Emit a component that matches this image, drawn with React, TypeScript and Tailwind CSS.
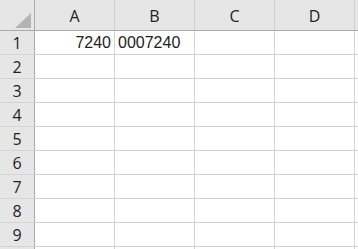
const cols = ['A', 'B', 'C', 'D'];
const rows = [1, 2, 3, 4, 5, 6, 7, 8, 9, 10];

const data: Record<string, string> = {
  A1: '7240',
  B1: '0007240',
};

function Corner() {
  return (
    <div className="relative w-[35px] h-full shrink-0 bg-[#e6e6e6] border-r border-[#ababab]">
      <svg width="16" height="15" className="absolute right-[3px] bottom-[2px]" viewBox="0 0 16 15">
        <polygon points="16,0 16,15 0,15" fill="#b4b4b4" />
      </svg>
    </div>
  );
}

export default function App() {
  return (
    <div className="w-[358px] h-[249px] overflow-hidden bg-white text-[#222] font-['Liberation_Sans',Arial,sans-serif]">
      <div className="flex h-[31px] border-b border-[#ababab] bg-[#e6e6e6]">
        <Corner />
        {cols.map((c) => (
          <div
            key={c}
            className="w-[80px] shrink-0 border-r border-[#d0d0d0] flex items-center justify-center pt-[2px] text-[16px] font-['Open_Sans',sans-serif]"
          >
            {c}
          </div>
        ))}
        <div className="flex-1" />
      </div>
      {rows.map((r) => (
        <div key={r} className="flex h-[24px] border-b border-[#d4d4d4]">
          <div className="w-[35px] shrink-0 bg-[#e6e6e6] border-r border-[#ababab] flex items-center justify-center text-[16px] font-['Open_Sans',sans-serif]">
            {r < 10 ? r : ''}
          </div>
          {cols.map((c) => {
            const v = data[c + r];
            const numeric = v && !v.startsWith('0');
            return (
              <div
                key={c}
                className={`w-[80px] shrink-0 border-r border-[#d4d4d4] flex items-center px-[3px] text-[16px] ${numeric ? 'justify-end' : 'justify-start'}`}
              >
                {v}
              </div>
            );
          })}
          <div className="flex-1" />
        </div>
      ))}
    </div>
  );
}
